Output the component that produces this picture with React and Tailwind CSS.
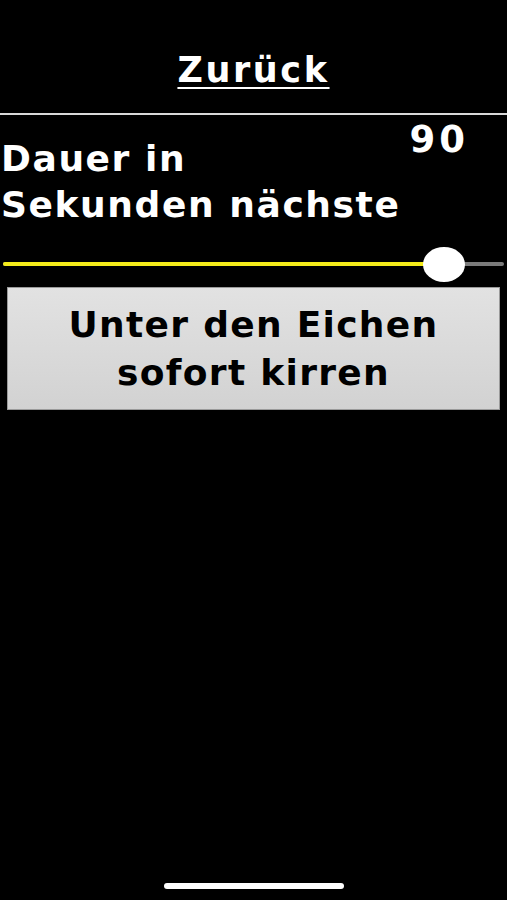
import React, { useState } from "react";

const font = { fontFamily: '"DejaVu Sans", "Liberation Sans", sans-serif' };

const DurationSlider = ({ value, max }) => {
  const pct = (value / max) * 100;

  return (
    <div className="relative mx-[3px] h-[35px]">
      <div className="absolute left-0 right-0 top-[15px] h-[4px] rounded-full bg-[#7a7a7a]" />
      <div
        className="absolute left-0 top-[15px] h-[4px] rounded-full bg-[#f5ec1a]"
        style={{ width: `${pct}%` }}
      />
      <div
        className="absolute top-0 h-[35px] w-[42px] -translate-x-1/2 rounded-[50%] bg-white"
        style={{ left: `${pct}%` }}
      />
    </div>
  );
};

const App = () => {
  const [seconds] = useState(90);

  return (
    <div className="flex min-h-[900px] w-full flex-col bg-black text-white" style={font}>
      <div className="flex h-[113px] items-start justify-center pt-[50px]">
        <button className="text-[35px] font-bold leading-[40px] tracking-[2.6px] underline decoration-2 underline-offset-[5px]">
          Zurück
        </button>
      </div>
      <div className="h-[2px] w-full bg-[#d8d8d8]" />

      <div className="relative px-[1px] pt-[21px]">
        <span className="absolute right-[38px] top-[5px] text-[37px] font-bold leading-[40px] tracking-[4px]">
          {seconds}
        </span>
        <p className="text-[36px] font-bold leading-[46px] tracking-[1.6px]">
          Dauer in
          <br />
          Sekunden nächste
        </p>
      </div>

      <div className="mt-[19px]">
        <DurationSlider value={88} max={100} />
      </div>

      <button className="mx-[7px] mt-[5px] flex h-[123px] flex-col items-center justify-center border border-[#9a9a9a] bg-gradient-to-b from-[#e2e2e2] to-[#d2d2d2] text-black">
        <span className="text-[36px] font-bold leading-[48px] tracking-[1.3px]">
          Unter den Eichen
        </span>
        <span className="text-[36px] font-bold leading-[48px] tracking-[1.3px]">
          sofort kirren
        </span>
      </button>

      <div className="flex-1" />
      <div className="flex justify-center pb-[11px]">
        <div className="h-[6px] w-[180px] rounded-full bg-white" />
      </div>
    </div>
  );
};

export default App;
